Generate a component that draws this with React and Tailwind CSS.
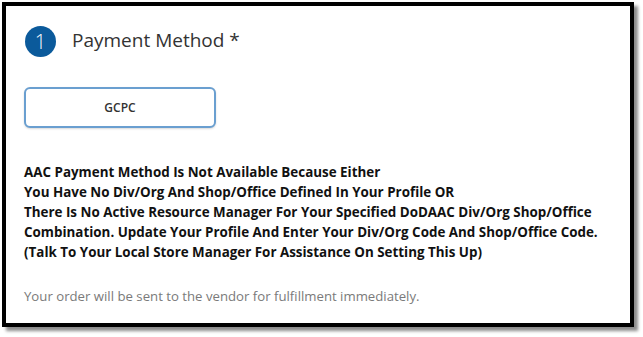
import React from 'react';

const App = () => {
    return (
        <div className="w-[643px] h-[337px] bg-white p-[2px] font-['Open_Sans','Noto_Sans',sans-serif]">
            <div className="w-[632px] h-[325px] border-4 border-black bg-white shadow-[4px_4px_3px_rgba(0,0,0,0.45)] flex flex-col pl-[18px] pt-[20px]">
                {/* Header */}
                <div className="flex items-center gap-[16px] pl-px">
                    <div className="w-[31px] h-[31px] rounded-full bg-[#0b5a9b] flex items-center justify-center text-white text-[20px] font-light leading-none">
                        1
                    </div>
                    <h2 className="text-[19px] text-[#333333] font-normal leading-none -mt-[3px]">Payment Method *</h2>
                </div>

                {/* Payment option */}
                <button className="mt-[30px] w-[192px] h-[41px] rounded-md border-2 border-[#6a9fd0] bg-white text-[12px] font-semibold text-[#333333] shadow-[0_1px_2px_rgba(0,0,0,0.15)]">
                    GCPC
                </button>

                {/* Notice */}
                <div className="mt-[34px] text-[13.4px] leading-[20px] font-bold text-[#111111]">
                    <p>AAC Payment Method Is Not Available Because Either</p>
                    <p>You Have No Div/Org And Shop/Office Defined In Your Profile OR</p>
                    <p>There Is No Active Resource Manager For Your Specified DoDAAC Div/Org Shop/Office</p>
                    <p>Combination. Update Your Profile And Enter Your Div/Org Code And Shop/Office Code.</p>
                    <p>(Talk To Your Local Store Manager For Assistance On Setting This Up)</p>
                </div>

                <p className="mt-[24px] text-[13.2px] leading-[20px] text-[#7a7a7a]">
                    Your order will be sent to the vendor for fulfillment immediately.
                </p>
            </div>
        </div>
    );
};

export default App;
